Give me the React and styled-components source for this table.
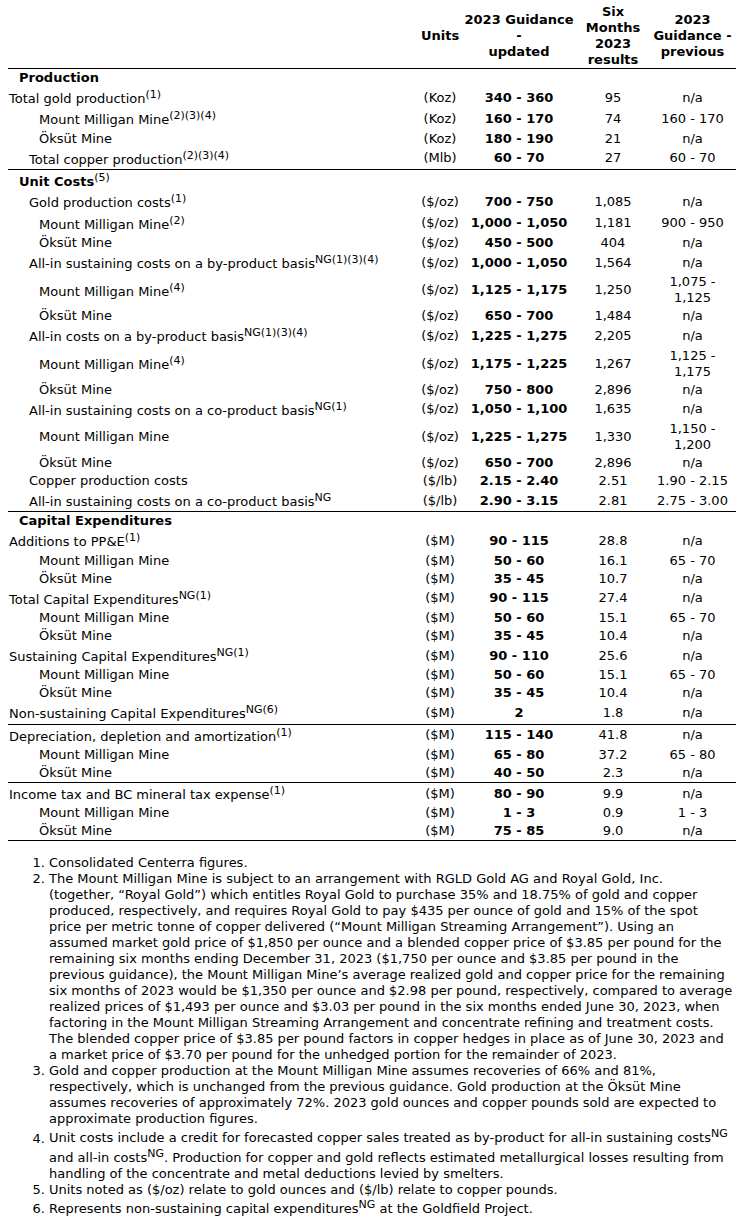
import React from 'react'
import styled, { createGlobalStyle } from 'styled-components'

const GlobalStyle = createGlobalStyle`
  body {
    margin: 0;
    background: #fff;
    color: #000;
    font-family: "DejaVu Sans", Verdana, sans-serif;
    font-size: 13px;
  }
`

const Page = styled.div`
  width: 742px;
  box-sizing: border-box;
  padding: 3px 0 0 8px;
`

const Table = styled.table`
  width: 728px;
  border-collapse: collapse;
  table-layout: fixed;
  line-height: 16px;
`

const HeadCell = styled.th`
  font-weight: bold;
  text-align: center;
  vertical-align: middle;
  padding: 1px 2px 0;
  border-bottom: 1px solid #000;
`

const Row = styled.tr`
  border-top: ${p => (p.$ruleTop ? '1px solid #000' : 'none')};
  border-bottom: ${p => (p.$ruleBottom ? '1px solid #000' : 'none')};
`

const Label = styled.td`
  padding: 1px 2px 1px ${p => 1 + p.$indent * 10}px;
  font-weight: ${p => (p.$section ? 'bold' : 'normal')};
  vertical-align: middle;
  white-space: nowrap;
`

const Value = styled.td`
  padding: 1px 2px;
  text-align: center;
  vertical-align: middle;
  font-weight: ${p => (p.$bold ? 'bold' : 'normal')};
`

const Sup = styled.sup`
  font-size: 11px;
  line-height: 13px;
  font-weight: normal;
`

const Notes = styled.ol`
  margin: 14px 0 0 0;
  padding: 0 0 0 41px;
  line-height: 16px;
  white-space: nowrap;
`

const Note = styled.li`
  padding: 0;
`

// indent: 0 = flush, 1 = section heading, 2 = metric, 3 = mine
const rows = [
  { label: 'Production', indent: 1, section: true },
  { label: 'Total gold production', sup: '(1)', indent: 0, units: '(Koz)', guide: '340 - 360', six: '95', prev: 'n/a' },
  { label: 'Mount Milligan Mine', sup: '(2)(3)(4)', indent: 3, units: '(Koz)', guide: '160 - 170', six: '74', prev: '160 - 170' },
  { label: 'Öksüt Mine', indent: 3, units: '(Koz)', guide: '180 - 190', six: '21', prev: 'n/a' },
  { label: 'Total copper production', sup: '(2)(3)(4)', indent: 2, units: '(Mlb)', guide: '60 - 70', six: '27', prev: '60 - 70' },
  { label: 'Unit Costs', sup: '(5)', indent: 1, section: true, ruleTop: true },
  { label: 'Gold production costs', sup: '(1)', indent: 2, units: '($/oz)', guide: '700 - 750', six: '1,085', prev: 'n/a' },
  { label: 'Mount Milligan Mine', sup: '(2)', indent: 3, units: '($/oz)', guide: '1,000 - 1,050', six: '1,181', prev: '900 - 950' },
  { label: 'Öksüt Mine', indent: 3, units: '($/oz)', guide: '450 - 500', six: '404', prev: 'n/a' },
  { label: 'All-in sustaining costs on a by-product basis', sup: 'NG(1)(3)(4)', indent: 2, units: '($/oz)', guide: '1,000 - 1,050', six: '1,564', prev: 'n/a' },
  { label: 'Mount Milligan Mine', sup: '(4)', indent: 3, units: '($/oz)', guide: '1,125 - 1,175', six: '1,250', prev: '1,075 - 1,125' },
  { label: 'Öksüt Mine', indent: 3, units: '($/oz)', guide: '650 - 700', six: '1,484', prev: 'n/a' },
  { label: 'All-in costs on a by-product basis', sup: 'NG(1)(3)(4)', indent: 2, units: '($/oz)', guide: '1,225 - 1,275', six: '2,205', prev: 'n/a' },
  { label: 'Mount Milligan Mine', sup: '(4)', indent: 3, units: '($/oz)', guide: '1,175 - 1,225', six: '1,267', prev: '1,125 - 1,175' },
  { label: 'Öksüt Mine', indent: 3, units: '($/oz)', guide: '750 - 800', six: '2,896', prev: 'n/a' },
  { label: 'All-in sustaining costs on a co-product basis', sup: 'NG(1)', indent: 2, units: '($/oz)', guide: '1,050 - 1,100', six: '1,635', prev: 'n/a' },
  { label: 'Mount Milligan Mine', indent: 3, units: '($/oz)', guide: '1,225 - 1,275', six: '1,330', prev: '1,150 - 1,200' },
  { label: 'Öksüt Mine', indent: 3, units: '($/oz)', guide: '650 - 700', six: '2,896', prev: 'n/a' },
  { label: 'Copper production costs', indent: 2, units: '($/lb)', guide: '2.15 - 2.40', six: '2.51', prev: '1.90 - 2.15' },
  { label: 'All-in sustaining costs on a co-product basis', sup: 'NG', indent: 2, units: '($/lb)', guide: '2.90 - 3.15', six: '2.81', prev: '2.75 - 3.00' },
  { label: 'Capital Expenditures', indent: 1, section: true, ruleTop: true },
  { label: 'Additions to PP&E', sup: '(1)', indent: 0, units: '($M)', guide: '90 - 115', six: '28.8', prev: 'n/a' },
  { label: 'Mount Milligan Mine', indent: 3, units: '($M)', guide: '50 - 60', six: '16.1', prev: '65 - 70' },
  { label: 'Öksüt Mine', indent: 3, units: '($M)', guide: '35 - 45', six: '10.7', prev: 'n/a' },
  { label: 'Total Capital Expenditures', sup: 'NG(1)', indent: 0, units: '($M)', guide: '90 - 115', six: '27.4', prev: 'n/a' },
  { label: 'Mount Milligan Mine', indent: 3, units: '($M)', guide: '50 - 60', six: '15.1', prev: '65 - 70' },
  { label: 'Öksüt Mine', indent: 3, units: '($M)', guide: '35 - 45', six: '10.4', prev: 'n/a' },
  { label: 'Sustaining Capital Expenditures', sup: 'NG(1)', indent: 0, units: '($M)', guide: '90 - 110', six: '25.6', prev: 'n/a' },
  { label: 'Mount Milligan Mine', indent: 3, units: '($M)', guide: '50 - 60', six: '15.1', prev: '65 - 70' },
  { label: 'Öksüt Mine', indent: 3, units: '($M)', guide: '35 - 45', six: '10.4', prev: 'n/a' },
  { label: 'Non-sustaining Capital Expenditures', sup: 'NG(6)', indent: 0, units: '($M)', guide: '2', six: '1.8', prev: 'n/a' },
  { label: 'Depreciation, depletion and amortization', sup: '(1)', indent: 0, units: '($M)', guide: '115 - 140', six: '41.8', prev: 'n/a', ruleTop: true },
  { label: 'Mount Milligan Mine', indent: 3, units: '($M)', guide: '65 - 80', six: '37.2', prev: '65 - 80' },
  { label: 'Öksüt Mine', indent: 3, units: '($M)', guide: '40 - 50', six: '2.3', prev: 'n/a' },
  { label: 'Income tax and BC mineral tax expense', sup: '(1)', indent: 0, units: '($M)', guide: '80 - 90', six: '9.9', prev: 'n/a', ruleTop: true },
  { label: 'Mount Milligan Mine', indent: 3, units: '($M)', guide: '1 - 3', six: '0.9', prev: '1 - 3' },
  { label: 'Öksüt Mine', indent: 3, units: '($M)', guide: '75 - 85', six: '9.0', prev: 'n/a', ruleBottom: true },
]

const GuidanceTable = () => (
  <Table>
    <colgroup>
      <col style={{ width: 411 }} />
      <col style={{ width: 42 }} />
      <col style={{ width: 116 }} />
      <col style={{ width: 72 }} />
      <col style={{ width: 87 }} />
    </colgroup>
    <thead>
      <tr>
        <HeadCell />
        <HeadCell>Units</HeadCell>
        <HeadCell>2023 Guidance<br />-<br />updated</HeadCell>
        <HeadCell>Six<br />Months<br />2023<br />results</HeadCell>
        <HeadCell>2023<br />Guidance -<br />previous</HeadCell>
      </tr>
    </thead>
    <tbody>
      {rows.map((r, i) => (
        <Row key={i} $ruleTop={r.ruleTop} $ruleBottom={r.ruleBottom}>
          <Label $indent={r.indent} $section={r.section}>
            {r.label}
            {r.sup && <Sup>{r.sup}</Sup>}
          </Label>
          <Value>{r.units}</Value>
          <Value $bold>{r.guide}</Value>
          <Value>{r.six}</Value>
          <Value>{r.prev}</Value>
        </Row>
      ))}
    </tbody>
  </Table>
)

// line breaks follow the source document
const Footnotes = () => (
  <Notes>
    <Note>Consolidated Centerra figures.</Note>
    <Note>
      The Mount Milligan Mine is subject to an arrangement with RGLD Gold AG and Royal Gold, Inc.<br />
      (together, “Royal Gold”) which entitles Royal Gold to purchase 35% and 18.75% of gold and copper<br />
      produced, respectively, and requires Royal Gold to pay $435 per ounce of gold and 15% of the spot<br />
      price per metric tonne of copper delivered (“Mount Milligan Streaming Arrangement”). Using an<br />
      assumed market gold price of $1,850 per ounce and a blended copper price of $3.85 per pound for the<br />
      remaining six months ending December 31, 2023 ($1,750 per ounce and $3.85 per pound in the<br />
      previous guidance), the Mount Milligan Mine’s average realized gold and copper price for the remaining<br />
      six months of 2023 would be $1,350 per ounce and $2.98 per pound, respectively, compared to average<br />
      realized prices of $1,493 per ounce and $3.03 per pound in the six months ended June 30, 2023, when<br />
      factoring in the Mount Milligan Streaming Arrangement and concentrate refining and treatment costs.<br />
      The blended copper price of $3.85 per pound factors in copper hedges in place as of June 30, 2023 and<br />
      a market price of $3.70 per pound for the unhedged portion for the remainder of 2023.
    </Note>
    <Note>
      Gold and copper production at the Mount Milligan Mine assumes recoveries of 66% and 81%,<br />
      respectively, which is unchanged from the previous guidance. Gold production at the Öksüt Mine<br />
      assumes recoveries of approximately 72%. 2023 gold ounces and copper pounds sold are expected to<br />
      approximate production figures.
    </Note>
    <Note>
      Unit costs include a credit for forecasted copper sales treated as by-product for all-in sustaining costs<Sup>NG</Sup><br />
      and all-in costs<Sup>NG</Sup>. Production for copper and gold reflects estimated metallurgical losses resulting from<br />
      handling of the concentrate and metal deductions levied by smelters.
    </Note>
    <Note>Units noted as ($/oz) relate to gold ounces and ($/lb) relate to copper pounds.</Note>
    <Note>
      Represents non-sustaining capital expenditures<Sup>NG</Sup> at the Goldfield Project.
    </Note>
  </Notes>
)

export default function App() {
  return (
    <>
      <GlobalStyle />
      <Page>
        <GuidanceTable />
        <Footnotes />
      </Page>
    </>
  )
}
